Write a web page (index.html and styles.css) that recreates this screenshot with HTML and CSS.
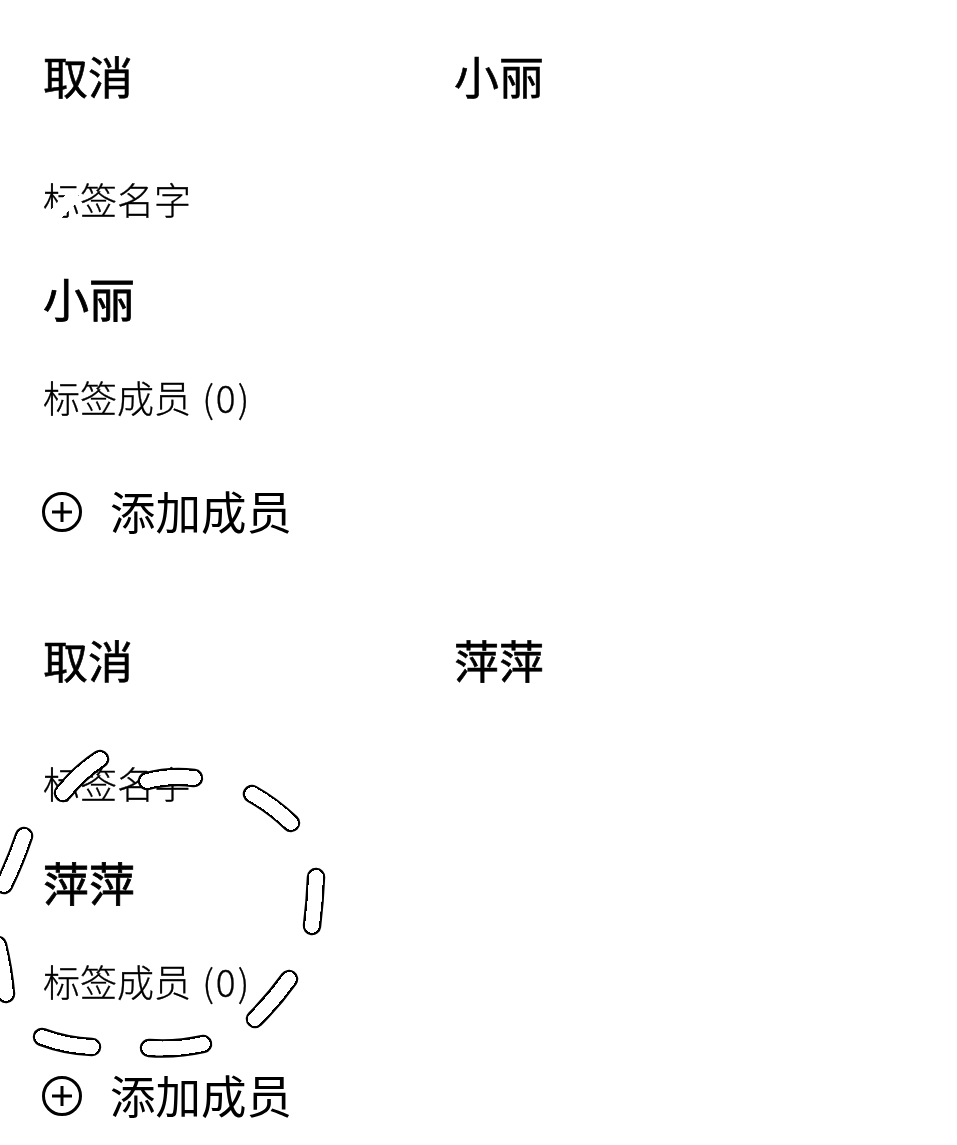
FILE: index.html
```html
<!DOCTYPE html>
<html lang="zh-CN">
<head>
    <meta charset="UTF-8">
    <meta name="viewport" content="width=device-width, initial-scale=1.0">
    <title>标签</title>
    <link rel="stylesheet" href="styles.css">
</head>
<body>

    <section class="panel">
        <div class="panelHeader">
            <span class="cancelBtn">取消</span>
            <span class="panelTitle">小丽</span>
        </div>
        <div class="fieldLabel">标签名字</div>
        <div class="tagName">小丽</div>
        <div class="memberLabel">标签成员 <span class="memberCount">(0)</span></div>
        <div class="addMember">
            <svg class="addIcon" viewBox="0 0 40 40">
                <circle cx="20" cy="20" r="18.5"></circle>
                <path d="M10 20H30M20 10V30"></path>
            </svg>
            <span class="addText">添加成员</span>
        </div>
    </section>

    <section class="panel">
        <div class="panelHeader">
            <span class="cancelBtn">取消</span>
            <span class="panelTitle">萍萍</span>
        </div>
        <div class="fieldLabel">标签名字</div>
        <div class="tagName">萍萍</div>
        <div class="memberLabel">标签成员 <span class="memberCount">(0)</span></div>
        <div class="addMember">
            <svg class="addIcon" viewBox="0 0 40 40">
                <circle cx="20" cy="20" r="18.5"></circle>
                <path d="M10 20H30M20 10V30"></path>
            </svg>
            <span class="addText">添加成员</span>
        </div>
    </section>

    <!-- marcas por cima do texto -->
    <svg class="scribble" viewBox="0 0 957 1145">
        <defs>
            <g id="dashes">
                <path d="M100 759Q80 772 63 793"></path>
                <path d="M147 781Q170 775 194 778"></path>
                <path d="M252 794Q272 805 291 823"></path>
                <path d="M316 877Q315 902 312 926"></path>
                <path d="M289 979Q274 1000 255 1019"></path>
                <path d="M203 1044Q176 1050 149 1048"></path>
                <path d="M92 1047Q66 1046 42 1037"></path>
                <path d="M-2 945Q4 970 6 994"></path>
                <path d="M24 836Q16 860 4 885"></path>
            </g>
        </defs>
        <path class="eraseMark" d="M72 198L56 214"></path>
        <use class="dashEdge" href="#dashes"></use>
        <use class="dashFill" href="#dashes"></use>
    </svg>

</body>
</html>
```

FILE: styles.css
```css
html, body {
    height: 100%;
}

body {
    position: relative;
    margin: 0;
    overflow: hidden;
    background-color: #fff;
    color: #000;
    font-family: "Noto Sans CJK SC", "Noto Sans", sans-serif;
    filter: grayscale(1) contrast(30);
}

.panel {
    height: 584px;
    padding-left: 43px;
}

.panelHeader {
    display: grid;
    grid-template-columns: 411px 1fr;
    align-items: center;
    box-sizing: border-box;
    height: 156px;
    padding-bottom: 6px;
    font-size: 45px;
    -webkit-text-stroke: 0.6px #000;
}

.fieldLabel,
.memberLabel {
    height: 44px;
    font-size: 37px;
    font-weight: 300;
    line-height: 44px;
    color: #222;
    -webkit-text-stroke: 0.3px #222;
}

.fieldLabel {
    margin-top: 21px;
}

.tagName {
    height: 60px;
    margin-top: 46px;
    font-size: 46px;
    line-height: 60px;
    -webkit-text-stroke: 0.8px #000;
}

.memberLabel {
    margin-top: 48px;
}

.memberCount {
    margin-left: 3px;
    letter-spacing: 2px;
}

.addMember {
    display: flex;
    align-items: center;
    gap: 28px;
    height: 60px;
    margin-top: 63px;
    margin-left: -1px;
    font-size: 45.5px;
    color: #222;
}

.addText {
    margin-bottom: 4px;
}

.addIcon {
    width: 40px;
    height: 40px;
    fill: none;
    stroke: #000;
    stroke-width: 3px;
}

.scribble {
    position: absolute;
    top: 0;
    left: 0;
    width: 957px;
    height: 1145px;
    pointer-events: none;
}

.scribble path {
    fill: none;
    stroke-linecap: round;
}

.scribble .eraseMark {
    stroke: #fff;
    stroke-width: 13px;
}

.dashEdge {
    stroke: #000;
    stroke-width: 18.5px;
}

.dashFill {
    stroke: #fff;
    stroke-width: 14px;
}
```
